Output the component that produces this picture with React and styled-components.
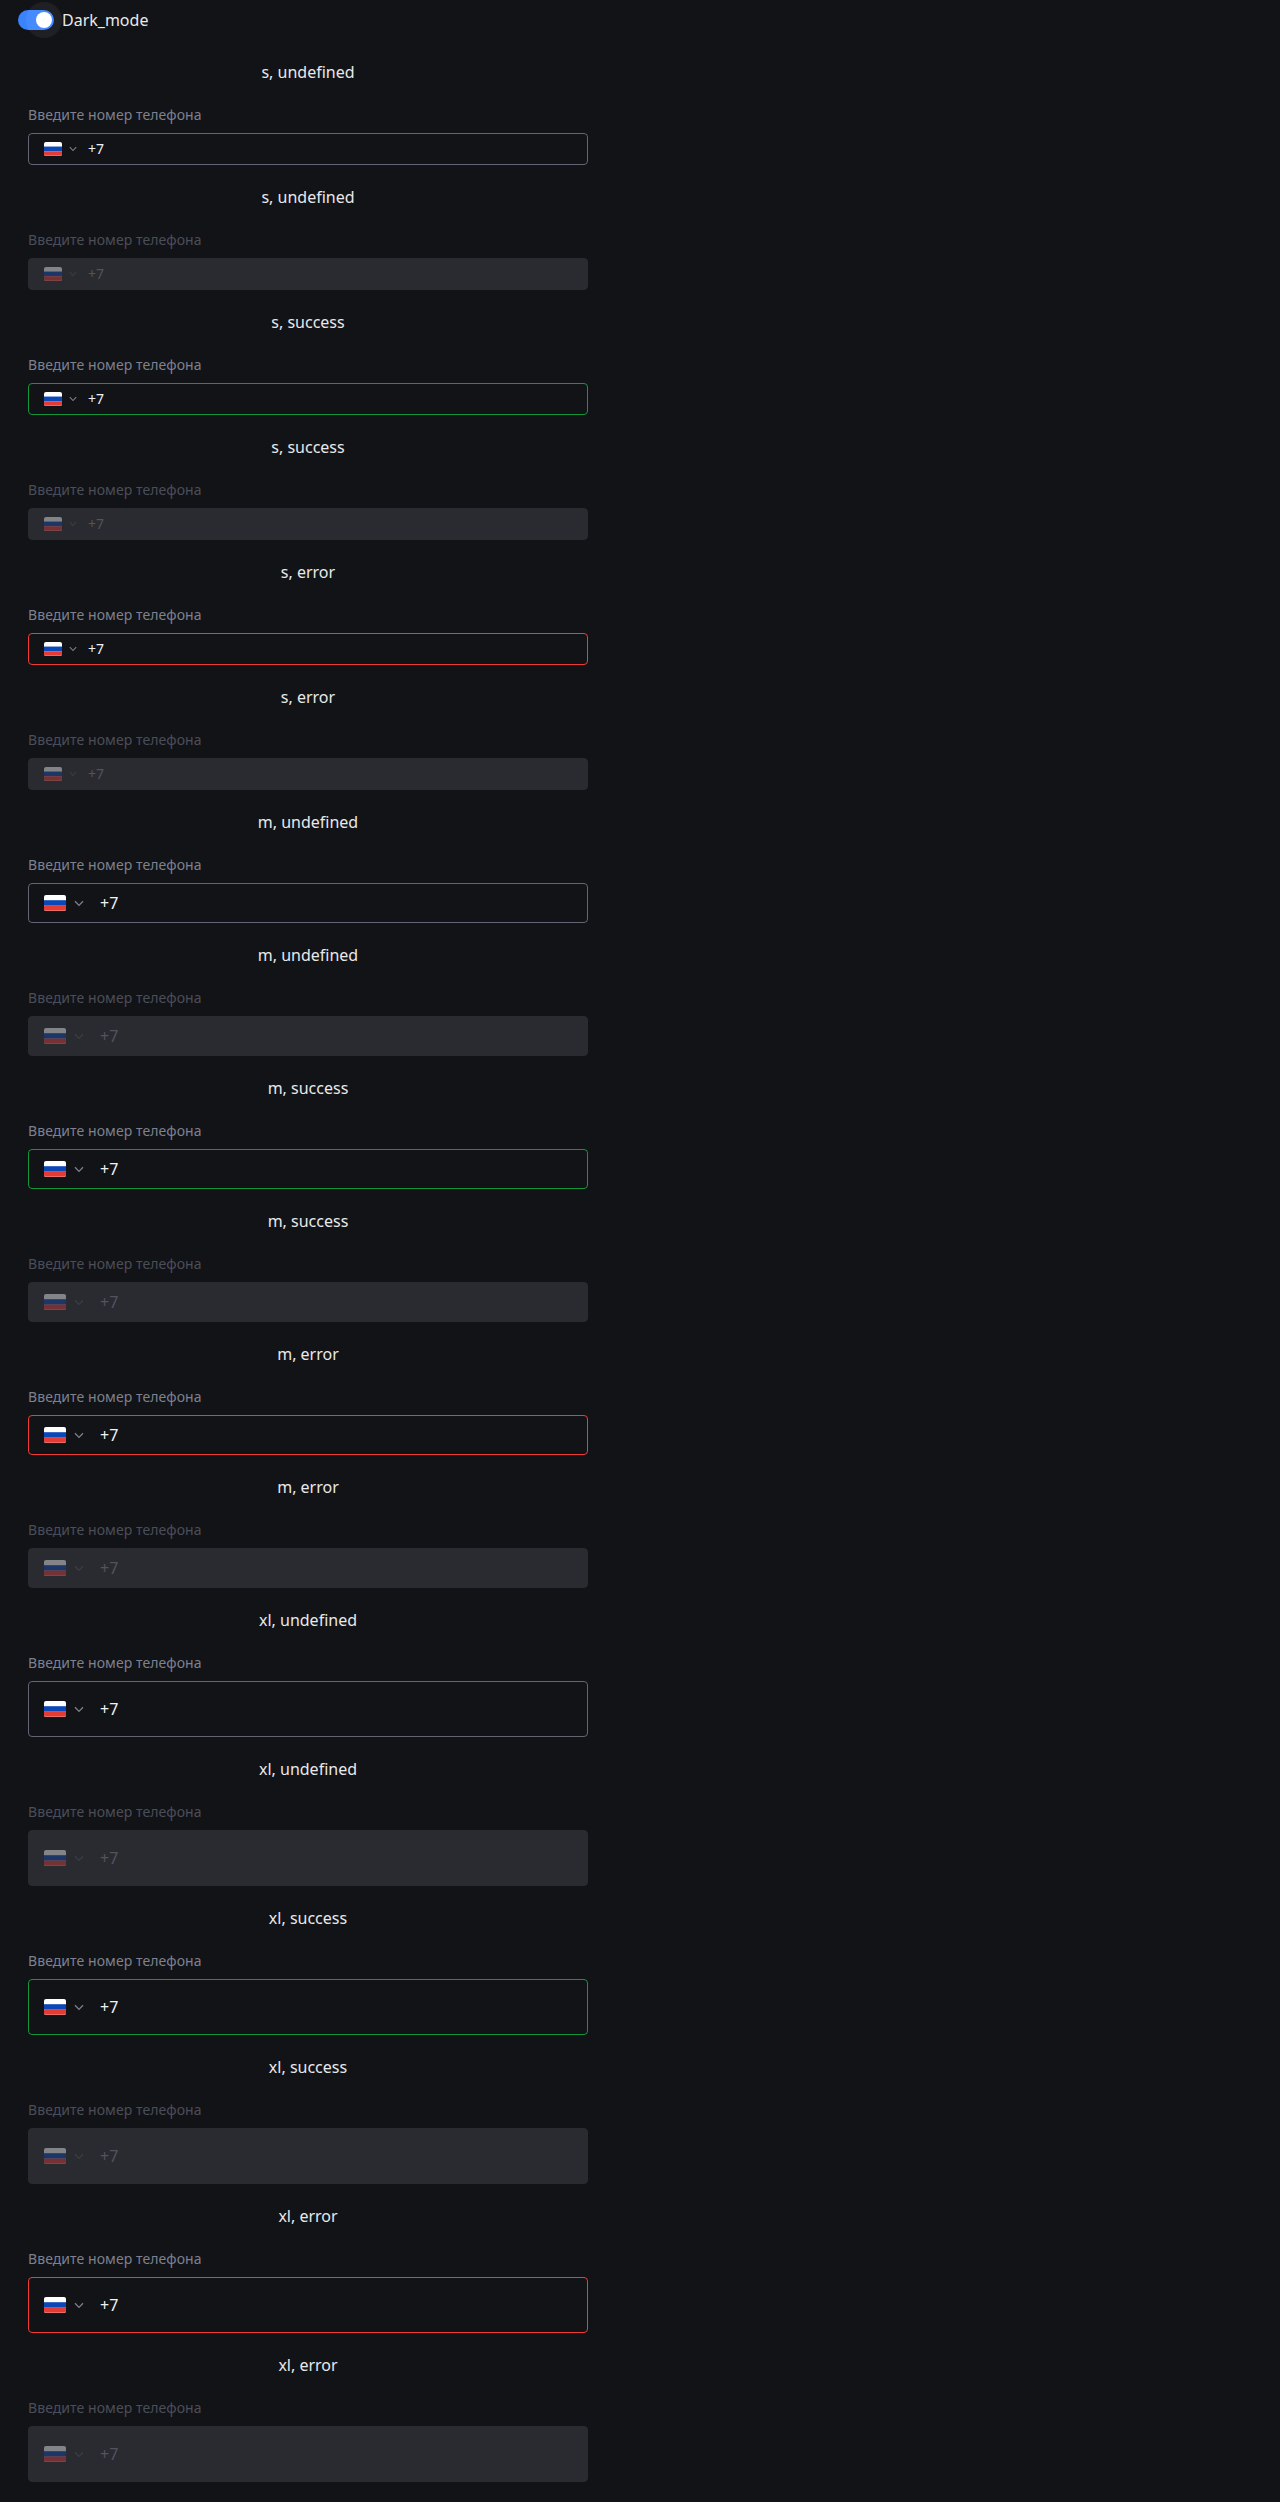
import React from 'react';
import styled, { createGlobalStyle } from 'styled-components';

const GlobalStyle = createGlobalStyle`
  *, *::before, *::after { box-sizing: border-box; }
  body {
    margin: 0;
    background: #121317;
    color: #e8e9eb;
    font-family: "Noto Sans", sans-serif;
    font-size: 16px;
    line-height: 24px;
  }
`;

const Page = styled.main`
  min-height: 2502px;
  padding-bottom: 20px;
`;

const Header = styled.label`
  display: flex;
  align-items: center;
  height: 40px;
  padding-left: 18px;
  gap: 8px;
`;

const Track = styled.span`
  display: flex;
  align-items: center;
  justify-content: flex-end;
  width: 36px;
  height: 20px;
  padding: 2px;
  border-radius: 10px;
  background: #3a83ff;
`;

const Thumb = styled.span`
  width: 16px;
  height: 16px;
  border-radius: 50%;
  background: #fff;
  box-shadow: 0 0 0 10px rgba(255, 255, 255, 0.06);
`;

const List = styled.div`
  display: flex;
  flex-direction: column;
  width: 616px;
  padding: 0 28px;
`;

const Item = styled.section`
  display: flex;
  flex-direction: column;
  padding-top: 20px;
`;

const Title = styled.div`
  height: 24px;
  margin-bottom: 21px;
  text-align: center;
`;

const Label = styled.div`
  height: 20px;
  margin-bottom: 8px;
  font-size: 14px;
  line-height: 20px;
  letter-spacing: 0.07px;
  color: ${(p) => (p.$disabled ? '#4b4e58' : '#7d818f')};
`;

const heights = { s: 32, m: 40, xl: 56 };
const borders = { undefined: '#626573', success: '#14963c', error: '#f03a36' };

const Field = styled.div`
  display: flex;
  align-items: center;
  height: ${(p) => heights[p.$size]}px;
  padding-left: 15px;
  border: 1px solid ${(p) => (p.$disabled ? '#2a2b30' : borders[p.$status])};
  border-radius: 4px;
  background: ${(p) => (p.$disabled ? '#2a2b30' : 'transparent')};
  color: ${(p) => (p.$disabled ? '#50545f' : '#f0f1f3')};
  font-size: ${(p) => (p.$size === 's' ? 14 : 16)}px;
`;

const Flag = styled.svg`
  display: block;
  flex: none;
  width: ${(p) => (p.$size === 's' ? 18 : 22)}px;
  height: ${(p) => (p.$size === 's' ? 14 : 16)}px;
  border-radius: 2px;
  opacity: ${(p) => (p.$disabled ? 0.42 : 1)};
`;

const Chevron = styled.svg`
  display: block;
  flex: none;
  width: ${(p) => (p.$size === 's' ? 8 : 10)}px;
  height: ${(p) => (p.$size === 's' ? 6 : 7)}px;
  margin-left: ${(p) => (p.$size === 's' ? 7 : 8)}px;
  margin-right: ${(p) => (p.$size === 's' ? 11 : 16)}px;
  color: ${(p) => (p.$disabled ? '#3b3d44' : '#7d818f')};
`;

const Switch = () => (
  <Track>
    <Thumb />
  </Track>
);

const PhoneInput = ({ size, status, disabled }) => (
  <Item>
    <Title>{`${size}, ${status}`}</Title>
    <Label $disabled={disabled}>Введите номер телефона</Label>
    <Field $size={size} $status={status} $disabled={disabled}>
      <Flag $size={size} $disabled={disabled} viewBox="0 0 22 16" preserveAspectRatio="none">
        <rect width="22" height="16" fill="#fff" />
        <rect y="5.2" width="22" height="5.5" fill="#0c47b7" />
        <rect y="10.6" width="22" height="5.15" fill="#e53b35" />
      </Flag>
      <Chevron $size={size} $disabled={disabled} viewBox="0 0 10 7" fill="none" stroke="currentColor" strokeWidth="1.3">
        <path d="M1 1.2 5 5.4 9 1.2" />
      </Chevron>
      <span>+7</span>
    </Field>
  </Item>
);

const cases = ['s', 'm', 'xl'].flatMap((size) =>
  ['undefined', 'success', 'error'].flatMap((status) =>
    [false, true].map((disabled) => ({ size, status, disabled }))
  )
);

export default function App() {
  return (
    <Page>
      <GlobalStyle />
      <Header>
        <Switch />
        <span>Dark_mode</span>
      </Header>
      <List>
        {cases.map((c) => (
          <PhoneInput key={`${c.size}-${c.status}-${c.disabled}`} {...c} />
        ))}
      </List>
    </Page>
  );
}
